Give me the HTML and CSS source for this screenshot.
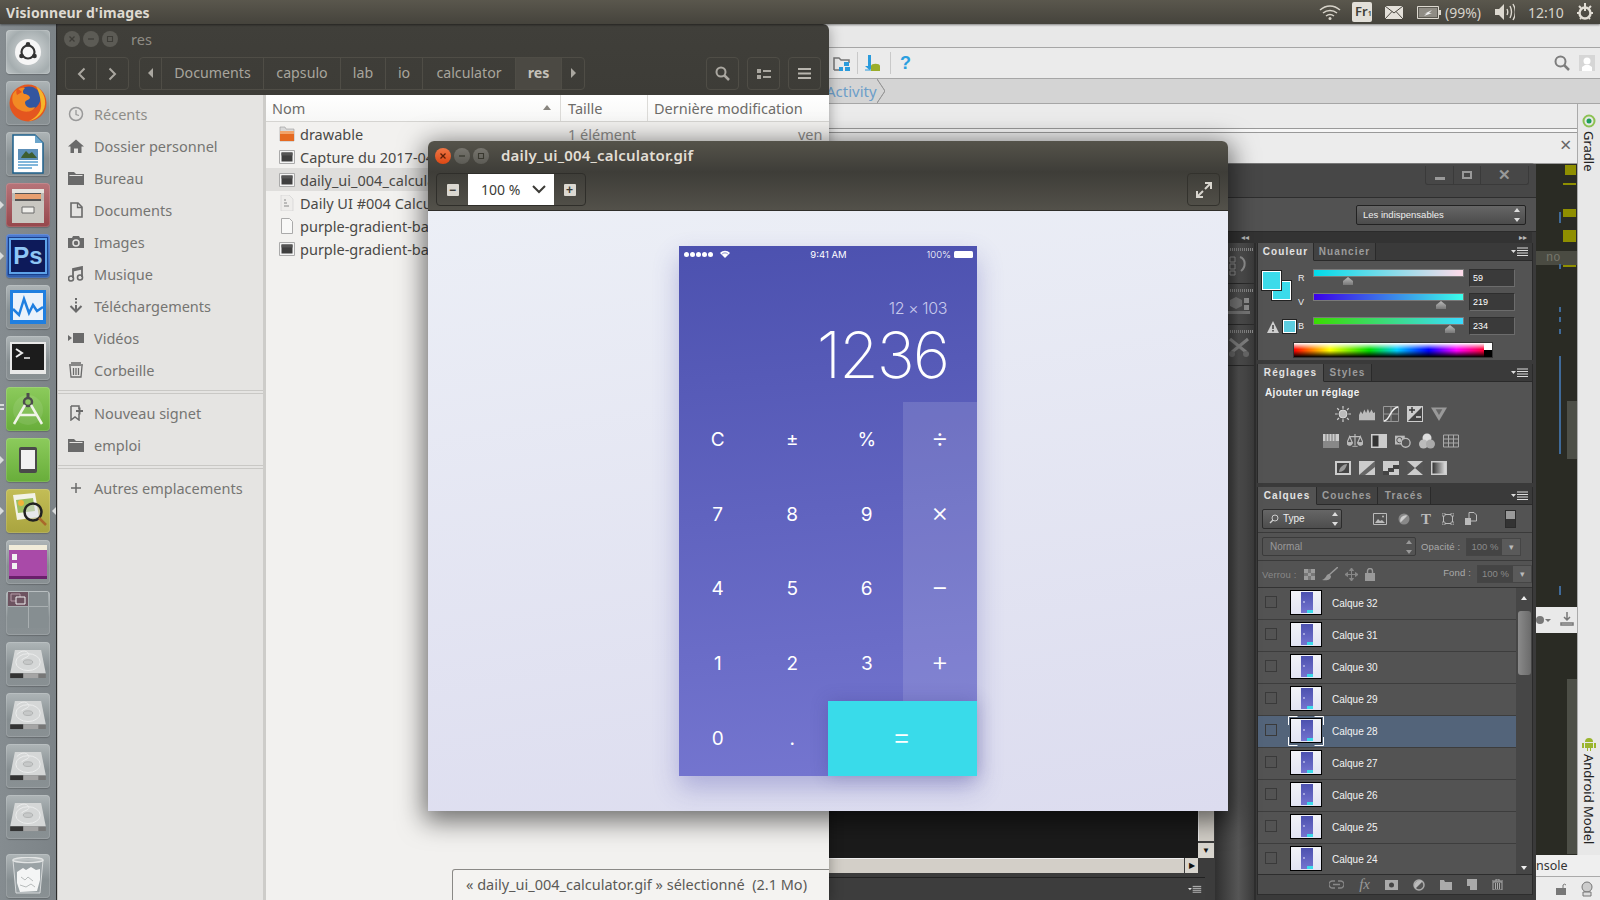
FILE: index.html
```html
<!DOCTYPE html>
<html lang="fr">
<head>
<meta charset="utf-8">
<title>Visionneur d'images</title>
<link rel="stylesheet" href="styles.css">
</head>
<body>
<svg class="defs" width="0" height="0">
  <defs>
    <symbol id="drive" viewBox="0 0 40 32">
      <path d="M6 1h28l5 25H1z" fill="#d5d7d7"/>
      <ellipse cx="20" cy="14" rx="13" ry="9" fill="none" stroke="#eceded" stroke-width="1"/>
      <ellipse cx="20" cy="14" rx="5" ry="2.500" fill="#c6c8c8" stroke="#a8abab" stroke-width=".8"/>
      <path d="M8 6c6-6 12-4 13 0 0 3-6 3-8 6" fill="none" stroke="#eceded" stroke-width="1"/>
      <path d="M1 26h38v5H1z" fill="#777"/>
      <path d="M1 26h14v5H1z" fill="#333"/>
      <path d="M15 26h16v5H15z" fill="#a5a5a5"/>
    </symbol>
    <symbol id="pmenu" viewBox="0 0 18 10">
      <path d="M0 3h5L2.500 6z" fill="#ddd"/>
      <path d="M6 1h11M6 3.500h11M6 6h11M6 8.500h11" stroke="#ddd" stroke-width="1"/>
    </symbol>
    <symbol id="imgfile" viewBox="0 0 16 16">
      <path d="M.5 1.500h15v13H.5z" fill="#f4f4f4" stroke="#aaa"/>
      <path d="M2.500 3.500h11v9h-11z" fill="#3f3f3f"/>
      <path d="M2.500 3.500h11v3h-11z" fill="#555"/>
    </symbol>
    <symbol id="mx" viewBox="0 0 8 8"><path d="M1.500 1.500l5 5M6.500 1.500l-5 5" stroke="currentColor" stroke-width="1.300"/></symbol>
    <symbol id="mm" viewBox="0 0 8 8"><path d="M1 4h6" stroke="currentColor" stroke-width="1.300"/></symbol>
    <symbol id="mb" viewBox="0 0 8 8"><path d="M1.500 1.500h5v5h-5z" fill="none" stroke="currentColor" stroke-width="1.100"/></symbol>
  </defs>
</svg>
<div class="desk">
  <header class="topbar">
    <span class="app-name">Visionneur d'images</span>
    <div class="tray">
      <svg class="tray-wifi" width="22" height="16" viewBox="0 0 22 16"><path d="M1 6c6-5.500 14-5.500 20 0M4 9c4-3.500 10-3.500 14 0M7 12c2.500-2 5.500-2 8 0" fill="none" stroke="#d8d4ca" stroke-width="1.500"/><circle cx="11" cy="14.500" r="1.500" fill="#d8d4ca"/></svg>
      <span class="tray-kbd">Fr<small>1</small></span>
      <svg class="tray-mail" width="18" height="13" viewBox="0 0 18 13"><path d="M0 0h18v13H0z" fill="#e4e1da"/><path d="M0 0l9 7 9-7M0 13l7-7.500M18 13l-7-7.500" fill="none" stroke="#4a473f"/></svg>
      <svg class="tray-batt" width="24" height="13" viewBox="0 0 24 13"><path d="M.5.500h21v12H.5z" fill="#5c5a52" stroke="#ddd9d0"/><path d="M22 4h2v5h-2z" fill="#ddd9d0"/><path d="M2 2h18v9H2z" fill="#8f8c84"/><path d="M7 8l8-4-3 3 3 0-8 3 3-3z" fill="#eee"/></svg>
      <span class="tray-text tray-pct">(99%)</span>
      <svg class="tray-vol" width="20" height="18" viewBox="0 0 20 18"><path d="M0 6h4l5-5v16l-5-5H0z" fill="#dcd8cf"/><path d="M12 6c1 2 1 4 0 6M15 3c2 4 2 8 0 12M18 1c3 5 3 11 0 16" fill="none" stroke="#dcd8cf" stroke-width="1.400"/></svg>
      <span class="tray-text tray-clock">12:10</span>
      <svg class="tray-gear" width="18" height="18" viewBox="0 0 18 18"><circle cx="9" cy="10" r="5.500" fill="none" stroke="#e2ded5" stroke-width="2.500"/><path d="M9 0v8M3 3l2 2M15 3l-2 2M1 10h2M15 10h2M4 16l1-1M14 16l-1-1" stroke="#e2ded5" stroke-width="2"/></svg>
    </div>
  </header>

  <nav class="launcher">
    <div class="tile tile-dash"><svg width="26" height="26" viewBox="0 0 36 36"><circle cx="18" cy="18" r="18" fill="#f6f6f6"/><circle cx="18" cy="18" r="9" fill="none" stroke="#333" stroke-width="3"/><circle cx="18" cy="7.500" r="3.200" fill="#333"/><circle cx="9" cy="23.500" r="3.200" fill="#333"/><circle cx="27" cy="23.500" r="3.200" fill="#333"/></svg></div>
    <div class="tile"><svg width="40" height="40" viewBox="0 0 40 40"><circle cx="20" cy="20" r="18.500" fill="#e4561f"/><circle cx="21" cy="15" r="11.500" fill="#33569f"/><path d="M28 3c8 5 12 16 7 25-3 5-8 9-14 10 8-4 13-10 12-18-1-6-2-12-5-17z" fill="#f6b52a"/><path d="M5 11c3-5 8-7 12-6-2 2-3 4-1 6 3 0 6 2 6 4-1 2-4 2-5 4 0 5 5 7 10 5-2 5-10 6-15 3C5 24 3 17 5 11z" fill="#f28a24"/><path d="M9 5c-1 3-1 5 0 7l5-3z" fill="#e4561f"/></svg></div>
    <div class="tile"><svg width="32" height="40" viewBox="0 0 32 40"><path d="M1 1h22l8 8v30H1z" fill="#fff" stroke="#1c5f8a" stroke-width="1.500"/><path d="M23 1l8 8h-8z" fill="#6ba5cb"/><path d="M6 15h20v11H6z" fill="#5c8fb8"/><path d="M10 22l4-5 3 3 3-2 5 6H9z" fill="#3e5e30"/><path d="M6 28h20M6 31h20M6 34h14" stroke="#5aa0d0" stroke-width="1.500"/></svg></div>
    <div class="tile tile-red pip-l"><svg width="36" height="40" viewBox="0 0 36 40"><path d="M2 4h32v34H2z" fill="#bdbbb5"/><path d="M2 4h32v4H2z" fill="#e4e2dd"/><path d="M5 8h26v8H5z" fill="#555"/><path d="M5 9h26v5H5z" fill="#e8a070"/><path d="M2 16h32v22H2z" fill="#c9c7c1"/><path d="M12 22h12v6H12z" fill="#efeeea" stroke="#6b6b6b"/></svg></div>
    <div class="tile tile-blue pip-l"><div class="ps-logo">Ps</div></div>
    <div class="tile"><svg width="38" height="36" viewBox="0 0 38 36"><path d="M1 1h36v34H1z" fill="#1f7fe0"/><path d="M4 4h30v27H4z" fill="#eaf2fb"/><path d="M4 20l6 6 5-16 5 14 4-8 4 6 6-4" fill="none" stroke="#1f7fe0" stroke-width="2.500"/></svg></div>
    <div class="tile"><svg width="36" height="32" viewBox="0 0 36 32"><path d="M0 0h36v32H0z" fill="#e8e8e8"/><path d="M2 2h32v26H2z" fill="#1c1c1c"/><path d="M6 7l6 4-6 4" fill="none" stroke="#eee" stroke-width="2"/><path d="M14 16h6" stroke="#eee" stroke-width="1.500"/></svg></div>
    <div class="tile tile-green pip-two"><svg width="34" height="36" viewBox="0 0 34 36"><circle cx="17" cy="19" r="15" fill="#fff" fill-opacity=".09"/><circle cx="17" cy="11" r="4" fill="none" stroke="#4c4c4c" stroke-width="2.500"/><path d="M17 2v5" stroke="#4c4c4c" stroke-width="3"/><path d="M14 14L3 33M20 14l11 19M8 24h18" stroke="#f0f4e8" stroke-width="2.500" fill="none"/></svg></div>
    <div class="tile tile-green pip-l"><svg width="18" height="26" viewBox="0 0 18 26"><path d="M2 0h14a2 2 0 0 1 2 2v22a2 2 0 0 1-2 2H2a2 2 0 0 1-2-2V2a2 2 0 0 1 2-2z" fill="#4a4a4a"/><path d="M2 3h14v19H2z" fill="#f1f1f1"/></svg></div>
    <div class="tile tile-olive pip-both"><svg width="38" height="40" viewBox="0 0 38 40"><path d="M4 4l22-2 4 24-22 3z" fill="#f2f2e8"/><path d="M7 9l17-2 2 13-17 2z" fill="#9cbf60"/><circle cx="12" cy="12" r="3" fill="#f0b23a"/><circle cx="24" cy="21" r="8.500" fill="#dde" fill-opacity=".5" stroke="#222" stroke-width="2.500"/><path d="M30 27l7 7" stroke="#a9692b" stroke-width="2.500"/></svg></div>
    <div class="tile"><svg width="38" height="34" viewBox="0 0 38 34"><path d="M0 0h38v34H0z" fill="#8f2b91"/><path d="M0 0h38v5H0z" fill="#f1ecd9"/><path d="M0 5h38v29H0z" fill="#a94aa8"/><path d="M3 9h5v6H3zM3 18h5v6H3z" fill="#f2f2f2"/><path d="M0 31h38v3H0z" fill="#6a1f6b"/></svg></div>
    <div class="tile tile-work"><div class="work-grid"><span class="work-on"><svg width="16" height="12" viewBox="0 0 16 12"><path d="M1 1h9v7H1z" fill="none" stroke="#b59aa6"/><path d="M6 4h9v7H6z" fill="#6d5360" stroke="#f0f0f0"/></svg></span><span></span><span></span><span></span></div></div>
    <div class="tile"><svg width="38" height="30"><use href="#drive"/></svg></div>
    <div class="tile"><svg width="38" height="30"><use href="#drive"/></svg></div>
    <div class="tile"><svg width="38" height="30"><use href="#drive"/></svg></div>
    <div class="tile"><svg width="38" height="30"><use href="#drive"/></svg></div>
    <div class="tile tile-trash"><svg width="32" height="38" viewBox="0 0 32 38"><path d="M1 3h30l-3 33H4z" fill="#9aa2a5" stroke="#d6d9da"/><ellipse cx="16" cy="3" rx="15" ry="2.500" fill="none" stroke="#e2e4e4" stroke-width="1.500"/><path d="M5 15l6-4 3 2 5-3 5 3 4-1 0 11-3 11-17 1-3-9z" fill="#f4f5f5"/><path d="M9 20l4 3 3-3 5 4M8 28l6 2 5-3 4 3" fill="none" stroke="#b8bcbc"/></svg></div>
  </nav>

  <section class="studio">
    <div class="studio-row studio-menu"></div>
    <div class="studio-row studio-tools">
      <svg class="st-folder" width="18" height="15" viewBox="0 0 18 15"><path d="M1 13V1h5l2 2h8v3" fill="none" stroke="#777" stroke-width="1.500"/><path d="M1 13h7" stroke="#777" stroke-width="1.500"/><path d="M11 5h5v4h-5zM6 10h4v4H6zM12 10h5v4h-5z" fill="#2a9bdc"/></svg>
      <i class="st-sep"></i>
      <svg class="st-sdk" width="15" height="17" viewBox="0 0 15 17"><path d="M3 0h3v11h3L4.500 15 0 11h3z" fill="#2a9bdc"/><path d="M6 11c0-3 9-3 9 0v5H6z" fill="#9aad2b"/><path d="M0 15h6" stroke="#2a9bdc"/></svg>
      <i class="st-sep"></i>
      <span class="st-help">?</span>
      <svg class="st-search" width="16" height="16" viewBox="0 0 16 16"><circle cx="6.500" cy="6.500" r="5" fill="none" stroke="#7d7d7d" stroke-width="2"/><path d="M10 10l5 5" stroke="#7d7d7d" stroke-width="2.500"/></svg>
      <svg class="st-user" width="16" height="16" viewBox="0 0 16 16"><path d="M0 0h16v16H0z" fill="#d6d6d6"/><circle cx="8" cy="6" r="3.500" fill="#fff"/><path d="M3 16v-4l3-2h4l3 2v4z" fill="#fff"/></svg>
    </div>
    <div class="studio-row studio-crumb"><span class="crumb-text">Activity</span><i class="crumb-chev"></i></div>
    <div class="studio-body">
      <div class="studio-left">
        <div class="studio-row studio-strip"></div>
        <div class="studio-row studio-gap"></div>
        <div class="studio-row studio-tabs"><span class="tab-x">×</span></div>
        <div class="editor">
          <i class="mark m1"></i><i class="mark m2"></i><i class="mark m3"></i><i class="mark m4"></i><i class="mark m5"></i>
          <div class="noal">no al</div>
          <i class="bluel b1"></i><i class="bluel b2"></i><i class="bluel b3"></i><i class="bluel b4"></i><i class="bluel b5"></i><i class="bluel b6"></i><i class="bluel b7"></i>
          <i class="greyb g1"></i><i class="greyb g2"></i>
          <div class="settingsrow">
            <svg width="16" height="14" viewBox="0 0 16 14"><circle cx="4" cy="7" r="4" fill="#777"/><path d="M9 6h6l-3 3z" fill="#777"/></svg>
            <svg width="14" height="16" viewBox="0 0 14 16"><path d="M7 0v8M4 5l3 3 3-3M1 11h12v2H1z" fill="none" stroke="#777" stroke-width="1.500"/></svg>
          </div>
        </div>
      </div>
      <aside class="stripe">
        <div class="stripe-top">
          <svg width="14" height="14" viewBox="0 0 14 14"><circle cx="7" cy="7" r="5.500" fill="none" stroke="#8cc152" stroke-width="2"/><circle cx="7" cy="7" r="2.500" fill="#1e9e5a"/></svg>
          <span class="stripe-label">Gradle</span>
        </div>
        <div class="stripe-bottom">
          <svg width="14" height="14" viewBox="0 0 14 14"><path d="M3 5a4 4 0 0 1 8 0zM3 6h8v5H3zM0 6h2v5H0zM12 6h2v5h-2zM5 11h1v3H5zM8 11h1v3H8z" fill="#9ab52e"/></svg>
          <span class="stripe-label">Android Model</span>
        </div>
      </aside>
    </div>
    <div class="console-tab">nsole</div>
    <div class="console-foot">
      <svg width="10" height="12" viewBox="0 0 10 12"><path d="M0 5h10v7H0z" fill="#777"/><path d="M7 5V2a2 2 0 0 1 3 0" fill="none" stroke="#777"/></svg>
      <svg width="14" height="16" viewBox="0 0 14 16"><circle cx="7" cy="6" r="5" fill="#ccc" stroke="#777"/><path d="M3 11h8v4H3z" fill="#ddd" stroke="#777"/></svg>
    </div>
  </section>

  <section class="ps">
    <div class="ps-title">
      <div class="ps-ctrls">
        <span class="ps-ctrl"><i class="pc-min"></i></span>
        <span class="ps-ctrl ps-ctrl-n"><i class="pc-max"></i></span>
        <span class="ps-ctrl ps-ctrl-w">✕</span>
      </div>
    </div>
    <div class="ps-options"><div class="ps-workspace"><span>Les indispensables</span><b class="updown"></b></div></div>
    <div class="ps-body">
      <div class="ps-doc">
        <div class="doc-main">
          <div class="canvas"></div>
          <div class="vscroll"><div class="vthumb"></div><div class="vbtn">▼</div></div>
        </div>
        <div class="hscroll"><div class="hthumb"></div><div class="hbtn">▶</div></div>
        <div class="doc-foot"><svg width="14" height="9"><use href="#pmenu"/></svg></div>
      </div>
      <div class="ps-right">
        <div class="collapse"><span>◂◂</span><span>▸▸</span></div>
        <div class="ps-columns">
          <div class="dock">
            <div class="dock-group"><i class="dock-dots"></i><svg width="22" height="22" viewBox="0 0 22 22"><path d="M2 3h5v5H2zM2 10h5v5H2zM2 17h5v4H2z" fill="none" stroke="#aaa"/><path d="M12 3c6 2 6 10 1 14" fill="none" stroke="#aaa" stroke-width="2"/></svg></div>
            <div class="dock-group"><i class="dock-dots"></i><svg width="22" height="22" viewBox="0 0 22 22"><path d="M2 5l6-3 6 3v6l-6 3-6-3z" fill="#888"/><path d="M16 3h5v5h-5zM16 10h5v5h-5z" fill="#aaa"/><path d="M0 16h22v3H0z" fill="#888"/></svg></div>
            <div class="dock-group"><i class="dock-dots"></i><svg width="22" height="22" viewBox="0 0 22 22"><path d="M2 3l16 13M20 3L4 16" stroke="#999" stroke-width="3"/><circle cx="4" cy="18" r="3" fill="#777"/><circle cx="18" cy="18" r="3" fill="#777"/></svg></div>
          </div>
          <div class="panels">
            <div class="panel">
              <div class="ptabs">
                <span class="ptab ptab-on ptw-56">Couleur</span><span class="ptab ptw-62">Nuancier</span>
                <svg class="pmenu" width="18" height="10"><use href="#pmenu"/></svg>
              </div>
              <div class="color-body">
                <div class="color-main">
                  <div class="swatches">
                    <i class="sw sw-fg"></i><i class="sw sw-bg"></i>
                    <svg class="sw-warn" width="12" height="12" viewBox="0 0 12 12"><path d="M6 0l6 12H0z" fill="#cfcfcf"/><path d="M5.300 4h1.400v4H5.300zM5.300 9h1.400v1.500H5.300z" fill="#333"/></svg>
                    <i class="sw sw-web"></i>
                  </div>
                  <div class="rgb">
                    <div class="rgb-row"><span class="rgb-l">R</span><div class="slider s-r"><i class="thumb th-r"></i></div><span class="rgb-in">59</span></div>
                    <div class="rgb-row"><span class="rgb-l">V</span><div class="slider s-v"><i class="thumb th-v"></i></div><span class="rgb-in">219</span></div>
                    <div class="rgb-row"><span class="rgb-l">B</span><div class="slider s-b"><i class="thumb th-b"></i></div><span class="rgb-in">234</span></div>
                  </div>
                </div>
                <div class="spectrum"><i class="spec-w"></i><i class="spec-k"></i></div>
              </div>
            </div>
            <div class="panel">
              <div class="ptabs">
                <span class="ptab ptab-on ptw-67">Réglages</span><span class="ptab ptw-48">Styles</span>
                <svg class="pmenu" width="18" height="10"><use href="#pmenu"/></svg>
              </div>
              <div class="adj-body">
                <div class="adj-title">Ajouter un réglage</div>
                <div class="adj-row">
                  <svg width="18" height="18" viewBox="0 0 18 18"><circle cx="9" cy="9" r="4.500" fill="#bbb" stroke="#ddd"/><path d="M9 0v3M9 15v3M0 9h3M15 9h3M2.500 2.500l2 2M13.500 13.500l2 2M2.500 15.500l2-2M13.500 4.500l2-2" stroke="#ccc" stroke-width="1.400"/></svg>
                  <svg width="18" height="16" viewBox="0 0 18 16"><path d="M0 15V9l2-4 2 3 2-5 2 4 2-5 2 5 2-4 2 4 2-1v9z" fill="#bbb"/></svg>
                  <svg width="16" height="16" viewBox="0 0 16 16"><path d="M.5.500h15v15H.5zM.5 8h15M8 .500v15" fill="none" stroke="#999"/><path d="M1 15c6 0 6-13 14-14" fill="none" stroke="#eee" stroke-width="1.400"/></svg>
                  <svg width="16" height="16" viewBox="0 0 16 16"><path d="M0 0h16v16H0z" fill="#ccc"/><path d="M1 15L15 1v14z" fill="#444"/><path d="M2 4h6M5 1v6" stroke="#333" stroke-width="1.400"/><path d="M9 11h5" stroke="#eee" stroke-width="1.400"/></svg>
                  <svg width="17" height="16" viewBox="0 0 17 16"><path d="M0 1h17L8.500 15.500z" fill="#999"/><path d="M5 3h7l-3.500 6z" fill="#666"/></svg>
                </div>
                <div class="adj-row adj-six">
                  <svg width="16" height="14" viewBox="0 0 16 14"><path d="M0 0h16v7H0z" fill="#ccc"/><path d="M3 0v7M6 0v7M9 0v7M12 0v7" stroke="#777"/><path d="M0 7h16v7H0z" fill="#888"/></svg>
                  <svg width="18" height="16" viewBox="0 0 18 16"><path d="M9 0v13M3 3h12M0 10l3-7 3 7zM12 10l3-7 3 7z" fill="none" stroke="#bbb" stroke-width="1.300"/><path d="M0 10a3 3 0 0 0 6 0zM12 10a3 3 0 0 0 6 0zM6 14h6" fill="#bbb" stroke="#bbb"/></svg>
                  <svg width="16" height="14" viewBox="0 0 16 14"><path d="M0 0h16v14H0z" fill="#ccc"/><path d="M1.500 1.500h6v11h-6z" fill="#333"/></svg>
                  <svg width="18" height="16" viewBox="0 0 18 16"><path d="M0 2h11v10H0z" fill="#bbb"/><circle cx="5" cy="7" r="3" fill="none" stroke="#444"/><circle cx="12" cy="10" r="5" fill="#555" stroke="#bbb" stroke-width="1.500"/></svg>
                  <svg width="16" height="16" viewBox="0 0 16 16"><circle cx="8" cy="5" r="4.500" fill="#ddd"/><circle cx="4.500" cy="11" r="4.500" fill="#bbb"/><circle cx="11.500" cy="11" r="4.500" fill="#aaa"/></svg>
                  <svg width="16" height="13" viewBox="0 0 16 13"><path d="M.5.500h15v12H.5zM.5 4.500h15M.5 8.500h15M5.500.500v12M10.500.500v12" fill="none" stroke="#aaa"/></svg>
                </div>
                <div class="adj-row">
                  <svg width="16" height="14" viewBox="0 0 16 14"><path d="M0 0h16v14H0z" fill="#ccc"/><path d="M2 2h12v10H2z" fill="#444"/><path d="M4 11c0-5 5-8 8-8-1 5-4 8-8 8z" fill="#999"/></svg>
                  <svg width="16" height="14" viewBox="0 0 16 14"><path d="M0 0h16v14H0z" fill="#ccc"/><path d="M0 14L16 0v6L6 14z" fill="#666"/></svg>
                  <svg width="16" height="14" viewBox="0 0 16 14"><path d="M0 0h16v14H0z" fill="#ccc"/><path d="M0 14v-4h5V7h5V4h6v4h-5v3H6v3z" fill="#444"/></svg>
                  <svg width="16" height="14" viewBox="0 0 16 14"><path d="M0 0h16v14H0z" fill="#ccc"/><path d="M0 0l8 7 8-7v14L8 7l-8 7z" fill="#555"/></svg>
                  <svg width="16" height="14" viewBox="0 0 16 14"><defs><linearGradient id="gm"><stop offset="0" stop-color="#333"/><stop offset="1" stop-color="#ddd"/></linearGradient></defs><path d="M0 0h16v14H0z" fill="#ccc"/><path d="M1.500 1.500h13v11h-13z" fill="url(#gm)"/></svg>
                </div>
              </div>
            </div>
            <div class="panel panel-layers">
              <div class="ptabs">
                <span class="ptab ptab-on ptw-59">Calques</span><span class="ptab ptw-61">Couches</span><span class="ptab ptw-53">Tracés</span>
                <svg class="pmenu" width="18" height="10"><use href="#pmenu"/></svg>
              </div>
              <div class="lrow lrow-filter">
                <div class="pdrop pd-type"><svg width="10" height="10" viewBox="0 0 10 10"><circle cx="6" cy="4" r="3" fill="none" stroke="#ccc"/><path d="M4 6L1 9" stroke="#ccc" stroke-width="1.400"/></svg><span>Type</span><b class="updown"></b></div>
                <div class="filter-icons">
                  <svg width="14" height="12" viewBox="0 0 14 12"><path d="M.5.500h13v11H.5z" fill="none" stroke="#bbb"/><path d="M2 10l3-4 2 2 2-1 3 3z" fill="#bbb"/><circle cx="10" cy="3.500" r="1" fill="#bbb"/></svg>
                  <svg width="12" height="12" viewBox="0 0 12 12"><circle cx="6" cy="6" r="5.500" fill="#888"/><path d="M9.500 2.500l-7 7A5.500 5.500 0 0 1 9.500 2.500z" fill="#ccc"/></svg>
                  <span class="ficon-t">T</span>
                  <svg width="12" height="12" viewBox="0 0 12 12"><path d="M1.500 1.500h9v9h-9z" fill="none" stroke="#bbb"/><path d="M0 0h3v3H0zM9 0h3v3H9zM0 9h3v3H0zM9 9h3v3H9z" fill="#555" stroke="#bbb" stroke-width=".7"/></svg>
                  <svg width="12" height="13" viewBox="0 0 12 13"><path d="M4 .500h5l2.500 2.500v6H4z" fill="none" stroke="#bbb"/><path d="M0 6h6v7H0z" fill="#bbb"/></svg>
                </div>
                <div class="filter-toggle"><i></i></div>
              </div>
              <div class="lrow lrow-blend">
                <div class="pdrop pd-mode"><span>Normal</span><b class="updown dim"></b></div>
                <span class="plabel">Opacité :</span>
                <div class="pcombo"><span>100 %</span><b>▾</b></div>
              </div>
              <div class="lrow lrow-lock">
                <span class="plabel verrou">Verrou :</span>
                <svg width="11" height="11" viewBox="0 0 11 11"><path d="M0 0h11v11H0z" fill="#777"/><path d="M0 0h4v4H0zM7 0h4v4H7zM4 4h3v3H4zM0 7h4v4H0zM7 7h4v4H7z" fill="#9c9c9c"/></svg>
                <svg width="16" height="14" viewBox="0 0 16 14"><path d="M16 0L7 8" stroke="#999" stroke-width="1.500"/><path d="M7 7c-3 0-2 4-7 6 5 1 9 0 9-4z" fill="#999"/></svg>
                <svg width="13" height="13" viewBox="0 0 13 13"><path d="M6.500 0v13M0 6.500h13M6.500 0L4.500 2.500h4zM6.500 13l-2-2.500h4zM0 6.500L2.500 4.500v4zM13 6.500l-2.500-2v4z" stroke="#888" fill="#888"/></svg>
                <svg width="10" height="13" viewBox="0 0 10 13"><path d="M0 5h10v8H0z" fill="#999"/><path d="M2.500 5V3a2.500 2.500 0 0 1 5 0v2" fill="none" stroke="#999" stroke-width="1.400"/></svg>
                <span class="plabel fond">Fond :</span>
                <div class="pcombo"><span>100 %</span><b>▾</b></div>
              </div>
              <div class="layers">
                <div class="layer-list">
                  <div class="layer"><i class="eye"></i><div class="lthumb"><div class="lphone"><i></i></div></div><span class="lname">Calque 32</span></div>
                  <div class="layer"><i class="eye"></i><div class="lthumb"><div class="lphone"><i></i></div></div><span class="lname">Calque 31</span></div>
                  <div class="layer"><i class="eye"></i><div class="lthumb"><div class="lphone"><i></i></div></div><span class="lname">Calque 30</span></div>
                  <div class="layer"><i class="eye"></i><div class="lthumb"><div class="lphone"><i></i></div></div><span class="lname">Calque 29</span></div>
                  <div class="layer layer-sel"><i class="eye"></i><div class="lthumb"><div class="lphone"><i></i></div><svg class="lcorners" width="36" height="30" viewBox="0 0 36 30"><path d="M.5 9V.5h9M26.500.5h9V9M.5 21v8.500h9M26.500 29.500h9V21" fill="none" stroke="#fff"/></svg></div><span class="lname">Calque 28</span></div>
                  <div class="layer"><i class="eye"></i><div class="lthumb"><div class="lphone"><i></i></div></div><span class="lname">Calque 27</span></div>
                  <div class="layer"><i class="eye"></i><div class="lthumb"><div class="lphone"><i></i></div></div><span class="lname">Calque 26</span></div>
                  <div class="layer"><i class="eye"></i><div class="lthumb"><div class="lphone"><i></i></div></div><span class="lname">Calque 25</span></div>
                  <div class="layer"><i class="eye"></i><div class="lthumb"><div class="lphone"><i></i></div></div><span class="lname">Calque 24</span></div>
                </div>
                <div class="layer-scroll"><span class="ls-up"></span><div class="ls-thumb"></div><span class="ls-down"></span></div>
              </div>
              <div class="layer-foot">
                <svg class="foot-link" width="15" height="9" viewBox="0 0 15 9"><path d="M6 1H3.500a3.500 3.500 0 0 0 0 7H6M9 1h2.500a3.500 3.500 0 0 1 0 7H9M4 4.500h7" fill="none" stroke="#888" stroke-width="1.300"/></svg>
                <span class="fx">fx</span>
                <svg width="13" height="10" viewBox="0 0 13 10"><path d="M0 0h13v10H0z" fill="#aaa"/><circle cx="6.500" cy="5" r="2.500" fill="#444"/></svg>
                <svg width="12" height="12" viewBox="0 0 12 12"><circle cx="6" cy="6" r="5" fill="#555" stroke="#aaa" stroke-width="1.500"/><path d="M9.500 2.500l-7 7A5 5 0 0 1 9.500 2.500z" fill="#bbb"/></svg>
                <svg width="12" height="10" viewBox="0 0 12 10"><path d="M0 10V0h4l1 2h7v8z" fill="#aaa"/></svg>
                <svg width="10" height="11" viewBox="0 0 10 11"><path d="M0 0h10v11H3V7H0z" fill="#aaa"/></svg>
                <svg width="11" height="11" viewBox="0 0 11 11"><path d="M0 2h11M4 2V0h3v2M1 3h9v8H1zM3.500 4v6M5.500 4v6M7.500 4v6" fill="none" stroke="#aaa"/></svg>
              </div>
            </div>
          </div>
        </div>
      </div>
    </div>
  </section>

  <section class="files">
    <div class="win-head">
      <div class="win-title">
        <div class="win-btns">
          <span class="dot dot-dim"><svg width="8" height="8"><use href="#mx"/></svg></span><span class="dot dot-dim"><svg width="8" height="8"><use href="#mm"/></svg></span><span class="dot dot-dim"><svg width="8" height="8"><use href="#mb"/></svg></span>
        </div>
        <span class="files-name">res</span>
      </div>
      <div class="files-tools">
        <div class="tgroup">
          <span class="tbtn tb-nav"><svg width="9" height="14" viewBox="0 0 9 14"><path d="M7.500 1.500L2 7l5.500 5.500" fill="none" stroke="#aaa7a0" stroke-width="2"/></svg></span>
          <span class="tbtn tb-nav"><svg width="9" height="14" viewBox="0 0 9 14"><path d="M1.500 1.500L7 7l-5.500 5.500" fill="none" stroke="#aaa7a0" stroke-width="2"/></svg></span>
        </div>
        <div class="tgroup pathbar">
          <span class="tbtn tb-arrow"><i class="tri-l"></i></span>
          <span class="tbtn pb-doc">Documents</span>
          <span class="tbtn pb-cap">capsulo</span>
          <span class="tbtn pb-lab">lab</span>
          <span class="tbtn pb-io">io</span>
          <span class="tbtn pb-calc">calculator</span>
          <span class="tbtn pb-res">res</span>
          <span class="tbtn tb-arrow tb-arrow-r"><i class="tri-r"></i></span>
        </div>
        <div class="tright">
          <span class="tgroup tbtn tb-act"><svg width="15" height="15" viewBox="0 0 15 15"><circle cx="6" cy="6" r="4.500" fill="none" stroke="#aaa7a0" stroke-width="2"/><path d="M9.500 9.500l4.500 4.500" stroke="#aaa7a0" stroke-width="2.500"/></svg></span>
          <span class="tgroup tbtn tb-act"><svg width="14" height="12" viewBox="0 0 14 12"><path d="M0 1h4v4H0zM0 7h4v4H0z" fill="#aaa7a0"/><path d="M6 2h8v2H6zM6 8h8v2H6z" fill="#aaa7a0"/></svg></span>
          <span class="tgroup tbtn tb-act"><svg width="13" height="11" viewBox="0 0 13 11"><path d="M0 0h13v2H0zM0 4.500h13v2H0zM0 9h13v2H0z" fill="#b8b5ae"/></svg></span>
        </div>
      </div>
    </div>
    <div class="files-body">
      <aside class="sidebar">
        <div class="side-item side-dim"><svg width="16" height="16" viewBox="0 0 16 16"><circle cx="8" cy="8" r="6.500" fill="none" stroke="#999" stroke-width="1.500"/><path d="M8 4v4.500l3 1" fill="none" stroke="#999" stroke-width="1.300"/></svg><span>Récents</span></div>
        <div class="side-item"><svg width="16" height="16" viewBox="0 0 16 16"><path d="M8 1.500L0 8.500h2.500V15H6v-4.500h4V15h3.500V8.500H16z" fill="#6a6a6a"/></svg><span>Dossier personnel</span></div>
        <div class="side-item"><svg width="16" height="16" viewBox="0 0 16 16"><path d="M0 2h6l2 2h8v11H0z" fill="#6a6a6a"/><path d="M1.500 5.500h13" stroke="#e5e4e2"/></svg><span>Bureau</span></div>
        <div class="side-item"><svg width="16" height="16" viewBox="0 0 16 16"><path d="M3 1h7l4 4v10H3z" fill="none" stroke="#6a6a6a" stroke-width="1.600"/><path d="M9.500 1v4.500H14" fill="none" stroke="#6a6a6a" stroke-width="1.300"/></svg><span>Documents</span></div>
        <div class="side-item"><svg width="16" height="16" viewBox="0 0 16 16"><path d="M0 4h4l1-2h6l1 2h4v10H0z" fill="#6a6a6a"/><circle cx="8" cy="9" r="3" fill="none" stroke="#e5e4e2" stroke-width="1.500"/></svg><span>Images</span></div>
        <div class="side-item"><svg width="16" height="16" viewBox="0 0 16 16"><path d="M5 12V3l9-2v10" fill="none" stroke="#6a6a6a" stroke-width="1.800"/><path d="M5 4.500l9-2" stroke="#6a6a6a" stroke-width="2"/><circle cx="3" cy="12.500" r="2.500" fill="none" stroke="#6a6a6a" stroke-width="1.600"/><circle cx="12" cy="11.500" r="2.500" fill="none" stroke="#6a6a6a" stroke-width="1.600"/></svg><span>Musique</span></div>
        <div class="side-item"><svg width="16" height="16" viewBox="0 0 16 16"><path d="M8 0v2M8 3.500v2M8 7v6M2.500 8L8 13.500 13.500 8" fill="none" stroke="#6a6a6a" stroke-width="2"/></svg><span>Téléchargements</span></div>
        <div class="side-item"><svg width="16" height="16" viewBox="0 0 16 16"><path d="M5 3h11v10H5zM0 5l4 3-4 3z" fill="#6a6a6a"/></svg><span>Vidéos</span></div>
        <div class="side-item side-last"><svg width="16" height="16" viewBox="0 0 16 16"><path d="M1 3h14M3 1h10M2 4l1 11h10l1-11M5.500 6v7M8 6v7M10.500 6v7" fill="none" stroke="#6a6a6a" stroke-width="1.300"/></svg><span>Corbeille</span></div>
        <div class="side-sep"></div>
        <div class="side-item"><svg width="16" height="16" viewBox="0 0 16 16"><path d="M3 1h8v3M3 1v14l4-3 4 3V9" fill="none" stroke="#6a6a6a" stroke-width="1.500"/><path d="M8 6h7M11.500 2.500v7" stroke="#6a6a6a" stroke-width="2"/></svg><span>Nouveau signet</span></div>
        <div class="side-item side-last"><svg width="16" height="16" viewBox="0 0 16 16"><path d="M0 2h6l2 2h8v11H0z" fill="#6a6a6a"/><path d="M1.500 5.500h13" stroke="#e5e4e2"/></svg><span>emploi</span></div>
        <div class="side-sep"></div>
        <div class="side-item"><svg width="16" height="16" viewBox="0 0 16 16"><path d="M8 3v10M3 8h10" stroke="#6a6a6a" stroke-width="1.500"/></svg><span>Autres emplacements</span></div>
      </aside>
      <div class="listing">
        <div class="cols">
          <span class="col col-name">Nom<i class="sort"></i></span>
          <span class="col col-size">Taille</span>
          <span class="col col-date">Dernière modification</span>
        </div>
        <div class="row"><svg width="16" height="16" viewBox="0 0 16 16"><path d="M1 1h5l1 2h8v12H1z" fill="#d9d9d9" stroke="#999" stroke-width=".6"/><path d="M1 5h14v10H1z" fill="#e56a21"/><path d="M1 5h14v3H1z" fill="#f2a36a"/></svg><span class="fname">drawable</span><span class="fsize">1 élément</span><span class="fdate">ven</span></div>
        <div class="row"><svg width="16" height="16"><use href="#imgfile"/></svg><span class="fname">Capture du 2017-04-21 à 11.05.16.png</span></div>
        <div class="row row-sel"><svg width="16" height="16"><use href="#imgfile"/></svg><span class="fname">daily_ui_004_calculator.gif</span></div>
        <div class="row"><svg width="16" height="16" viewBox="0 0 16 16"><path d="M2 0h8l4 4v12H2z" fill="#eeedeb" stroke="#ccc" stroke-width=".6"/><path d="M5 5h2M5 8h3M5 11h5" stroke="#888"/></svg><span class="fname">Daily UI #004 Calculator.psd</span></div>
        <div class="row"><svg width="16" height="16" viewBox="0 0 16 16"><path d="M2.500.500h8l3 3v12h-11z" fill="#f8f8f7" stroke="#aaa"/></svg><span class="fname">purple-gradient-background.psd</span></div>
        <div class="row"><svg width="16" height="16"><use href="#imgfile"/></svg><span class="fname">purple-gradient-background.png</span></div>
        <div class="pill">« daily_ui_004_calculator.gif » sélectionné  (2.1 Mo)</div>
      </div>
    </div>
  </section>

  <section class="viewer">
    <div class="win-head vw-head">
      <div class="win-title vw-title">
        <div class="win-btns">
          <span class="dot dot-red"><svg width="8" height="8"><use href="#mx"/></svg></span><span class="dot dot-grey"><svg width="8" height="8"><use href="#mm"/></svg></span><span class="dot dot-grey"><svg width="8" height="8"><use href="#mb"/></svg></span>
        </div>
        <span class="vw-name">daily_ui_004_calculator.gif</span>
      </div>
      <div class="vw-tools">
        <div class="zoombox">
          <span class="zoom-btn"><i class="zoom-sq">−</i></span>
          <span class="zoom-val"><span>100 %</span><svg width="14" height="9" viewBox="0 0 14 9"><path d="M1 1l6 6 6-6" fill="none" stroke="#3c3b37" stroke-width="2"/></svg></span>
          <span class="zoom-btn"><i class="zoom-sq">+</i></span>
        </div>
        <span class="vw-full"><svg width="16" height="16" viewBox="0 0 16 16"><path d="M9 1h6v6M15 1L9 7M7 15H1V9M1 15l6-6" fill="none" stroke="#d8d5ce" stroke-width="2"/></svg></span>
      </div>
    </div>
    <div class="stage">
      <div class="phone">
        <div class="status">
          <span class="st-left"><i class="sigdots"><b></b><b></b><b></b><b></b><b></b></i><svg width="10" height="8" viewBox="0 0 10 8"><path d="M0 3c3-3 7-3 10 0L5 8z" fill="#fff"/><path d="M2.200 3.900c1.600-1.400 4-1.400 5.600 0" stroke="#4f53b1" stroke-width=".7" fill="none"/></svg></span>
          <span class="st-mid">9:41 AM</span>
          <span class="st-right">100%<i class="batt"></i></span>
        </div>
        <div class="display">
          <div class="expr">12 × 103</div>
          <div class="result">1236</div>
        </div>
        <div class="keys">
          <span class="key">C</span><span class="key">±</span><span class="key">%</span><span class="key key-op">÷</span>
          <span class="key">7</span><span class="key">8</span><span class="key">9</span><span class="key key-op">×</span>
          <span class="key">4</span><span class="key">5</span><span class="key">6</span><span class="key key-op">−</span>
          <span class="key">1</span><span class="key">2</span><span class="key">3</span><span class="key key-op">+</span>
          <span class="key">0</span><span class="key">.</span><span class="key key-eq">=</span>
        </div>
      </div>
    </div>
  </section>
</div>
</body>
</html>
```
FILE: styles.css
```css
* { box-sizing: border-box; }
html, body { margin: 0; padding: 0; }
body { width: 1600px; height: 900px; overflow: hidden; background: #333; font-family: "Noto Sans", "Open Sans", sans-serif; }
.defs { position: absolute; }
i { font-style: normal; display: block; }
svg { display: block; flex: none; }

.desk { position: relative; width: 1600px; height: 900px; overflow: hidden; background: #444; }

/* top panel */
.topbar { position: relative; z-index: 20; height: 24px; display: flex; align-items: center; justify-content: space-between; background: linear-gradient(#5a574d, #45433c); box-shadow: 0 1px 2px rgba(0,0,0,.45); color: #e0dcd3; }
.app-name { margin-left: 6px; font-size: 14px; font-weight: 700; letter-spacing: .1px; color: #dedad1; }
.tray { display: flex; align-items: center; height: 24px; }
.tray-wifi { margin-right: 11px; }
.tray-kbd { width: 20px; height: 20px; border-radius: 2px; background: #e3e0d9; color: #403e38; font-size: 13px; font-weight: 600; line-height: 18px; padding-left: 3px; margin-right: 13px; }
.tray-kbd small { font-size: 7px; }
.tray-mail { margin-right: 14px; }
.tray-batt { margin-right: 4px; }
.tray-text { font-size: 14px; color: #d7d3ca; }
.tray-pct { width: 50px; }
.tray-vol { margin-right: 13px; }
.tray-clock { width: 44px; }
.tray-gear { margin-right: 6px; margin-left: 4px; }

/* launcher */
.launcher { position: relative; z-index: 10; width: 56px; height: 876px; background: linear-gradient(90deg, #858c90, #7c8387); padding: 6px 0 0 6px; display: flex; flex-direction: column; gap: 7px; box-shadow: 1px 0 1px rgba(0,0,0,.25); }
.tile { position: relative; width: 44px; height: 44px; flex: none; border-radius: 4px; display: flex; align-items: center; justify-content: center; background: linear-gradient(#aeb5b7, #868e91 60%, #899093); box-shadow: inset 0 0 0 1px rgba(255,255,255,.14), 0 1px 1px rgba(0,0,0,.2); }
.tile-dash { background: radial-gradient(circle at 55% 50%, #d8dcdd, #a5adaf 70%, #c0c6c7); }
.tile-red { background: linear-gradient(#b77479, #96474c); }
.tile-blue { background: linear-gradient(#4c7ad0, #2f5dab); }
.tile-green { background: linear-gradient(#8ccb5c, #68ad3a); }
.tile-olive { background: linear-gradient(#c3bd56, #a9a43f); }
.tile-trash { margin-top: 8px; }
.pip-l::before, .pip-both::before, .pip-two::before { content: ""; position: absolute; left: -6px; top: 18px; border: 4px solid transparent; border-left-color: #d9dcdc; border-right-width: 0; }
.pip-two::after { content: ""; position: absolute; left: -6px; top: 21px; width: 4px; height: 2px; background: #d9dcdc; box-shadow: 0 -4px 0 #d9dcdc; }
.pip-two::before { display: none; }
.pip-both::after { content: ""; position: absolute; right: -6px; top: 18px; border: 4px solid transparent; border-right-color: #d9dcdc; border-left-width: 0; }
.ps-logo { width: 38px; height: 36px; border: 2px solid #5ea3ea; outline: 1px solid #1b3f8c; background: #0d1a5a; color: #8fc6f5; font: 700 24px/32px "Liberation Sans", sans-serif; text-align: center; }
.work-grid { width: 40px; height: 36px; display: grid; grid-template-columns: 1fr 1fr; grid-template-rows: 14px 1fr; gap: 1px; background: #a9afb1; margin-top: -6px; }
.tile-work { overflow: hidden; }
.work-grid span { background: #868e91; }
.work-grid .work-on { background: #6d5360; display: flex; align-items: center; justify-content: center; }

/* android studio behind */
.studio { position: absolute; left: 760px; top: 24px; width: 840px; height: 876px; display: flex; flex-direction: column; background: #e8e8e8; }
.studio-row { flex: none; background: #e8e8e8; border-bottom: 1px solid #a6a6a6; }
.studio-menu { height: 24px; }
.studio-tools { height: 31px; display: flex; align-items: center; background: #ebebeb; padding-left: 73px; }
.st-folder { margin-top: 2px; }
.st-sep { width: 1px; height: 22px; background: #c9c9c9; }
.st-folder + .st-sep { margin-left: 6px; margin-right: 7px; }
.st-sdk + .st-sep { margin-left: 10px; margin-right: 9px; }
.st-help { color: #2a9fe0; font: 700 18px/1 "Liberation Sans", sans-serif; }
.st-search { margin-left: auto; margin-right: 9px; }
.st-user { margin-right: 5px; }
.studio-crumb { height: 25px; display: flex; align-items: center; background: #d4d4d4; padding-left: 66px; }
.crumb-text { color: #6c9ec9; font-size: 15px; }
.crumb-chev { width: 8px; height: 24px; margin-left: 0; background: linear-gradient(to bottom left, transparent 44%, #999 48%, #999 52%, transparent 56%) top/100% 50% no-repeat, linear-gradient(to top left, transparent 44%, #999 48%, #999 52%, transparent 56%) bottom/100% 50% no-repeat; }
.studio-body { flex: 1; display: flex; min-height: 0; }
.studio-left { flex: 1; display: flex; flex-direction: column; min-width: 0; }
.studio-strip { height: 25px; background: #ebebeb; border-bottom-color: #999; }
.studio-gap { height: 4px; background: #f6f6f6; border-bottom-color: #999; }
.studio-tabs { height: 31px; background: #ececec; display: flex; justify-content: flex-end; align-items: center; padding-right: 3px; border-bottom: 1px solid #9a9a9a; }
.tab-x { color: #666; font-size: 20px; line-height: 1; width: 14px; margin-top: -6px; }
.editor { position: relative; flex: 1; background: #2a2b24; }
.mark { position: absolute; background: #8f8f00; }
.m1 { left: 805px; top: 1px; width: 11px; height: 10px; }
.m2 { left: 803px; top: 19px; width: 13px; height: 2px; }
.m3 { left: 803px; top: 45px; width: 13px; height: 8px; }
.m4 { left: 803px; top: 66px; width: 13px; height: 12px; }
.m5 { left: 803px; top: 100px; width: 13px; height: 3px; }
.noal { position: absolute; left: 776px; top: 87px; width: 41px; height: 14px; background: #4a4b42; color: #77776c; font: 12px/14px "Liberation Mono", monospace; padding-left: 10px; overflow: hidden; }
.bluel { position: absolute; left: 799px; width: 2px; background: #3f6a99; }
.b1 { top: 48px; height: 11px; }
.b2 { top: 100px; height: 5px; }
.b3 { top: 143px; height: 5px; }
.b4 { top: 153px; height: 5px; }
.b5 { top: 165px; height: 5px; }
.b6 { top: 192px; height: 98px; }
.b7 { top: 422px; height: 9px; }
.greyb { position: absolute; left: 807px; width: 10px; background: #4d4f47; }
.g1 { top: 237px; height: 58px; }
.g2 { top: 515px; height: 175px; }
.settingsrow { position: absolute; left: 776px; top: 443px; width: 41px; height: 26px; background: #e9e9e9; display: flex; align-items: center; justify-content: space-between; padding: 0 3px 0 0; }
.console-tab { flex: none; height: 22px; background: #efefef; border-bottom: 1px solid #aaa; padding-left: 776px; font-size: 12.500px; line-height: 22px; color: #333; white-space: nowrap; }
.console-foot { flex: none; height: 23px; background: #ececec; display: flex; justify-content: flex-end; align-items: center; gap: 14px; padding-right: 6px; }
.stripe { flex: none; width: 23px; background: #e8e8e8; border-left: 1px solid #aaa; display: flex; flex-direction: column; justify-content: space-between; align-items: center; padding: 10px 0 11px; }
.stripe-top, .stripe-bottom { display: flex; flex-direction: column; align-items: center; gap: 3px; }
.stripe-label { writing-mode: vertical-rl; font-size: 13px; line-height: 14px; color: #222; }

/* photoshop */
.ps { position: absolute; left: 790px; top: 164px; width: 746px; height: 736px; display: flex; flex-direction: column; background: #3a3a3a; border-radius: 0 5px 0 0; box-shadow: 0 -1px 0 #777; font-family: "Liberation Sans", sans-serif; color: #eee; }
.ps-title { flex: none; height: 33px; background: #474747; display: flex; justify-content: flex-end; padding-right: 7px; }
.ps-ctrls { display: flex; height: 19px; margin-top: 2px; border: 1px solid #3a3a3a; border-top: 0; border-radius: 0 0 3px 3px; }
.ps-ctrl { width: 28px; display: flex; align-items: center; justify-content: center; color: #999; font-size: 15px; font-weight: 700; border-right: 1px solid #3a3a3a; }
.ps-ctrl-n { width: 27px; }
.ps-ctrl-w { width: 47px; border-right: 0; }
.pc-min { width: 10px; height: 3px; background: #999; margin-top: 6px; }
.pc-max { width: 10px; height: 8px; border: 2px solid #999; }
.ps-options { flex: none; height: 35px; background: #525252; border-top: 1px solid #2e2e2e; border-bottom: 1px solid #2b2b2b; display: flex; justify-content: flex-end; align-items: center; padding-right: 10px; }
.ps-workspace { width: 170px; height: 20px; background: linear-gradient(#666, #4b4b4b); border: 1px solid #222; border-radius: 2px; display: flex; align-items: center; justify-content: space-between; padding: 0 4px 0 6px; font-size: 9.500px; color: #eee; }
.updown { width: 0; height: 14px; display: block; position: relative; margin-right: 4px; }
.updown::before, .updown::after { content: ""; position: absolute; left: -3px; border: 3px solid transparent; }
.updown::before { top: 0; border-bottom: 4px solid #ddd; border-top-width: 0; }
.updown::after { bottom: 0; border-top: 4px solid #ddd; border-bottom-width: 0; }
.updown.dim::before { border-bottom-color: #999; }
.updown.dim::after { border-top-color: #999; }
.ps-body { flex: 1; display: flex; min-height: 0; }
.ps-doc { flex: none; width: 425px; display: flex; flex-direction: column; background: #3c3c3c; }
.doc-main { flex: 1; display: flex; min-height: 0; }
.canvas { flex: 1; background: #1b1b1b; }
.vscroll { flex: none; width: 16px; margin-right: 1px; background: #3c3c3c; display: flex; flex-direction: column; }
.vthumb { flex: 1; background: #d3cfc8; border-left: 1px solid #eee; }
.vbtn { flex: none; height: 15px; margin-top: 2px; background: #d8d5ce; color: #111; font-size: 8px; line-height: 15px; text-align: center; }
.hscroll { flex: none; height: 15px; margin-right: 17px; display: flex; gap: 1px; }
.hthumb { flex: 1; background: #d3cfc8; border-top: 1px solid #efefef; }
.hbtn { flex: none; width: 13px; background: #d8d5ce; color: #111; font-size: 8px; line-height: 15px; text-align: center; }
.doc-foot { flex: none; height: 23px; margin-top: 4px; margin-right: 10px; background: #3d3d3d; border-top: 1px solid #222; display: flex; align-items: center; justify-content: flex-end; padding-right: 3px; }
.ps-right { flex: 1; display: flex; flex-direction: column; min-width: 0; }
.collapse { flex: none; height: 11px; background: #333; color: #bbb; font-size: 8px; line-height: 11px; display: flex; justify-content: space-between; padding: 0 5px 0 26px; margin-right: 4px; }
.ps-columns { flex: 1; display: flex; min-height: 0; }
.dock { flex: none; width: 41px; background: linear-gradient(90deg, #303030, #565656 60%, #3a3a3a); border-right: 2px solid #2d2d2d; display: flex; flex-direction: column; align-items: stretch; }
.dock-group { height: 41px; border-bottom: 1px solid #2c2c2c; display: flex; flex-direction: column; align-items: flex-end; padding-right: 4px; }
.dock-group svg { opacity: .75; }
.dock-dots { width: 24px; height: 3px; margin: 5px -4px 3px 0; background: repeating-linear-gradient(90deg, #888 0 1px, transparent 1px 2px); }
.panels { flex: none; width: 276px; display: flex; flex-direction: column; gap: 4px; margin-right: 4px; margin-left: 1px; }
.panel { background: #535353; border: 1px solid #2a2a2a; border-width: 0 1px; }
.ptabs { height: 18px; display: flex; align-items: stretch; background: #3a3a3a; border-bottom: 1px solid #2a2a2a; position: relative; }
.ptab { display: block; font-size: 10px; font-weight: 700; letter-spacing: 1.100px; line-height: 18px; color: #9c9c9c; text-align: center; border-right: 1px solid #2a2a2a; background: #424242; white-space: nowrap; }
.ptab-on { background: #535353; color: #e3e3e3; margin-bottom: -1px; border-bottom: 1px solid #535353; }
.ptw-56 { width: 56px; }
.ptw-62 { width: 62px; }
.ptw-67 { width: 66px; }
.ptw-48 { width: 48px; }
.ptw-59 { width: 59px; }
.ptw-61 { width: 61px; }
.ptw-53 { width: 53px; }
.pmenu { margin: 4px 3px 0 auto; }
.color-body { height: 99px; padding-top: 8px; }
.color-main { display: flex; height: 67px; }
.swatches { position: relative; width: 37px; flex: none; }
.sw { position: absolute; }
.sw-fg { left: 4px; top: 2px; width: 19px; height: 19px; background: #3bdbea; border: 1px solid #fff; outline: 1px solid #222; z-index: 1; }
.sw-bg { left: 14px; top: 12px; width: 19px; height: 19px; background: #3bdbea; border: 1px solid #fff; outline: 1px solid #222; }
.sw-warn { position: absolute; left: 9px; top: 52px; }
.sw-web { left: 25px; top: 51px; width: 13px; height: 13px; background: #5ccde0; border: 1px solid #fff; outline: 1px solid #222; }
.rgb { display: flex; flex-direction: column; gap: 6px; }
.rgb-row { display: flex; height: 18px; }
.rgb-l { width: 19px; padding-left: 3px; font-size: 9px; line-height: 18px; color: #eee; }
.slider { position: relative; width: 149px; height: 6px; margin-top: 1px; outline: 1px solid #7a7a7a; }
.s-r { background: linear-gradient(90deg, #00dbea, #ffdbea); }
.s-v { background: linear-gradient(90deg, #3b00ea, #3bffea); }
.s-b { background: linear-gradient(90deg, #3bdb00, #3bdbff); }
.thumb { position: absolute; top: 7px; width: 10px; height: 8px; background: linear-gradient(#bbb, #777); clip-path: polygon(50% 0, 100% 50%, 100% 100%, 0 100%, 0 50%); }
.th-r { left: 29px; }
.th-v { left: 122px; }
.th-b { left: 131px; }
.rgb-in { width: 46px; margin-left: 6px; height: 18px; background: #3a3a3a; border: 1px solid #2e2e2e; border-bottom-color: #6c6c6c; border-right-color: #6c6c6c; font-size: 9px; line-height: 16px; padding-left: 3px; color: #fff; }
.spectrum { position: relative; margin-left: 35px; width: 200px; height: 16px; margin-top: 6px; border: 1px solid #333; background: linear-gradient(#fff0, #fff0 55%, #000 100%), linear-gradient(#fff, #fff0 45%), linear-gradient(90deg, #f00, #ff0 18%, #0d0 38%, #0cf 52%, #00f 68%, #f0f 82%, #f03 96%); }
.spec-w { position: absolute; right: 0; top: 0; width: 8px; height: 7px; background: #fff; }
.spec-k { position: absolute; right: 0; bottom: 0; width: 8px; height: 7px; background: #000; }
.adj-body { height: 101px; padding: 4px 0 0 0; }
.adj-title { font-size: 10px; font-weight: 700; line-height: 14px; padding-left: 7px; color: #f0f0f0; letter-spacing: .35px; }
.adj-row { height: 27px; display: flex; align-items: center; justify-content: center; gap: 8px; padding-right: 8px; }
.adj-row svg { width: 16px; height: 16px; }
.panel-layers { flex: 1; display: flex; flex-direction: column; min-height: 0; margin-bottom: 5px; }
.lrow { flex: none; display: flex; align-items: center; border-bottom: 1px solid #3a3a3a; padding-left: 4px; }
.lrow-filter { height: 28px; }
.lrow-blend { height: 28px; }
.lrow-lock { height: 27px; border-bottom-color: #333; }
.pdrop { height: 20px; border: 1px solid #2c2c2c; border-radius: 2px; background: linear-gradient(#666, #4d4d4d); font-size: 10px; display: flex; align-items: center; padding: 0 0 0 6px; gap: 4px; color: #eee; }
.pdrop .updown { margin-left: auto; margin-right: 6px; }
.pd-type { width: 80px; }
.pd-mode { width: 154px; height: 19px; background: #535353; border-color: #3b3b3b; color: #999; margin-right: 5px; padding-left: 7px; }
.filter-icons { margin-left: 31px; display: flex; align-items: center; gap: 11px; width: 118px; }
.ficon-t { font: 700 15px/12px "Liberation Serif", serif; color: #bbb; }
.filter-toggle { margin-left: 14px; width: 11px; height: 18px; border: 1px solid #2b2b2b; background: #333; }
.filter-toggle i { height: 8px; background: #9a9a9a; }
.plabel { font-size: 9.500px; color: #aaa; white-space: nowrap; letter-spacing: .15px; }
.pcombo { width: 55px; height: 18px; margin-left: 6px; display: flex; border: 1px solid #454545; background: #444; font-size: 9.500px; line-height: 16px; color: #8a8a8a; }
.pcombo span { width: 35px; flex: none; text-align: center; white-space: nowrap; overflow: hidden; }
.pcombo b { flex: 1; background: #5a5a5a; font-size: 9px; font-weight: 400; text-align: center; color: #bbb; }
.verrou { margin-right: 8px; color: #888; }
.lrow-lock svg { margin-right: 7px; }
.fond { margin-left: auto; margin-top: -3px; color: #aaa; }
.layers { flex: 1; display: flex; min-height: 0; }
.layer-list { flex: 1; min-width: 0; overflow: hidden; }
.layer { height: 32px; display: flex; align-items: center; border-bottom: 1px solid #3d3d3d; padding: 0 0 3px 7px; }
.layer-sel { background: #53647a; }
.eye { width: 12px; height: 12px; border: 1px solid #3a3a3a; margin-right: 13px; }
.lthumb { position: relative; width: 32px; height: 25px; background: linear-gradient(#f2f3f8, #e2e4f3); border: 1px solid #000; display: flex; justify-content: center; margin-right: 10px; flex: none; }
.lphone { width: 12px; height: 21px; margin-top: 1px; margin-left: 2px; background: radial-gradient(circle, #cfd0f0 0 .5px, transparent 1px) 1px 8px/4px 4px no-repeat, linear-gradient(#4c51af, #7474cf); display: flex; justify-content: flex-end; align-items: flex-end; }
.lphone i { width: 6px; height: 3px; background: #3bdbea; }
.lcorners { position: absolute; left: -3px; top: -3px; }
.lname { font-size: 10px; color: #f2f2f2; margin-top: 2px; }
.layer-scroll { flex: none; width: 16px; display: flex; flex-direction: column; align-items: center; background: #464646; padding-top: 8px; }
.ls-up { border: 3px solid transparent; border-bottom: 4px solid #eee; border-top: 0; }
.ls-thumb { width: 13px; height: 64px; margin-top: 11px; background: linear-gradient(90deg, #8a8a8a, #6b6b6b); border-radius: 3px; }
.ls-down { margin-top: auto; margin-bottom: 4px; border: 3px solid transparent; border-top: 4px solid #eee; border-bottom: 0; }
.layer-foot { flex: none; height: 21px; display: flex; align-items: center; justify-content: flex-end; gap: 15px; padding-right: 29px; background: #4b4b4b; border-top: 1px solid #2d2d2d; border-bottom: 1px solid #2d2d2d; }
.fx { color: #999; font: italic 15px/1 "Liberation Serif", serif; }

/* shared window chrome */
.win-head { flex: none; background: #3d3c37; border-radius: 6px 6px 0 0; color: #dfdbd2; }
.win-title { display: flex; align-items: center; }
.win-btns { display: flex; gap: 3px; }
.dot { width: 16px; height: 16px; border-radius: 50%; display: flex; align-items: center; justify-content: center; color: #3c3b37; }
.dot-dim { background: #5c5b55; color: #3e3d38; }
.dot-red { background: linear-gradient(#f07746, #dd4814); color: #5b1f08; }
.dot-grey { background: linear-gradient(#77756e, #5c5b55); color: #39382f; }

/* files window */
.files { position: absolute; left: 57px; top: 24px; width: 772px; height: 876px; display: flex; flex-direction: column; box-shadow: 0 2px 14px rgba(0,0,0,.35); border-radius: 6px 6px 0 0; }
.files .win-head { height: 71px; background: linear-gradient(#403f3a, #3d3c37); }
.files .win-title { height: 28px; padding: 2px 0 0 7px; }
.files-name { margin-left: 13px; font-size: 14.500px; color: #8f8c84; }
.files-tools { display: flex; padding: 5px 8px 0 8px; height: 38px; }
.tgroup { display: flex; height: 33px; border: 1px solid #4f4d46; border-radius: 4px; }
.tbtn { display: flex; align-items: center; justify-content: center; font-size: 14.200px; color: #a8a59d; border-right: 1px solid #4f4d46; height: 100%; padding-bottom: 2px; }
.tgroup .tbtn:last-child { border-right: 0; }
.tb-nav { width: 31px; padding-bottom: 0; }
.pathbar { margin-left: 10px; }
.tb-arrow { width: 22px; }
.tb-arrow-r { width: 22px; }
.tri-l { border: 5px solid transparent; border-right: 5px solid #aaa7a0; border-left: 0; }
.tri-r { border: 5px solid transparent; border-left: 5px solid #aaa7a0; border-right: 0; }
.pb-doc { width: 102px; }
.pb-cap { width: 77px; }
.pb-lab { width: 45px; }
.pb-io { width: 37px; }
.pb-calc { width: 93px; }
.pb-res { width: 46px; background: #4b4943; color: #c4c1b9; font-weight: 700; }
.tright { margin-left: auto; display: flex; gap: 8px; }
.tb-act { width: 33px; padding-bottom: 0; border-right: 1px solid #4f4d46 !important; }
.files-body { flex: 1; display: flex; min-height: 0; }
.sidebar { flex: none; width: 209px; background: #e5e4e2; border-left: 1px solid #cfcecb; border-right: 3px solid #cdccc9; padding-top: 3px; }
.side-item { height: 32px; display: flex; align-items: center; padding-left: 10px; font-size: 14.500px; color: #757572; gap: 10px; }
.side-dim { color: #8e8d89; }
.side-sep { height: 4px; margin: 4px 0 3px; border-top: 1px solid #c9c8c5; border-bottom: 1px solid #c9c8c5; }
.listing { position: relative; flex: 1; background: #f2f1ef; min-width: 0; overflow: hidden; }
.cols { height: 27px; background: linear-gradient(#fff, #f7f7f6); border-bottom: 1px solid #d5d4d1; display: flex; font-size: 14.500px; color: #6d6c69; line-height: 26px; }
.col { display: block; padding-left: 6px; border-right: 1px solid #dcdbd8; position: relative; white-space: nowrap; }
.col-name { width: 295px; }
.col-size { width: 87px; padding-left: 7px; }
.col-date { flex: 1; border-right: 0; }
.sort { position: absolute; right: 9px; top: 10px; border: 4px solid transparent; border-bottom: 5px solid #88857f; border-top: 0; }
.row { height: 23px; display: flex; align-items: center; font-size: 14.500px; color: #4a4946; padding-left: 13px; gap: 5px; white-space: nowrap; }
.row-sel { background: #dfdedc; }
.fname { width: 255px; overflow: hidden; }
.fsize { margin-left: 8px; color: #8a8987; width: 225px; }
.fdate { color: #8a8987; }
.pill { position: absolute; left: 186px; bottom: 0; width: 420px; height: 31px; border: 1px solid #8a8986; border-bottom: 0; border-radius: 3px 0 0 0; background: #f4f3f1; padding-left: 13px; font-size: 14.500px; line-height: 29px; color: #5b5a57; white-space: pre; }

/* viewer */
.viewer { position: absolute; left: 428px; top: 141px; width: 800px; height: 670px; display: flex; flex-direction: column; box-shadow: 0 6px 26px 4px rgba(0,0,0,.55); border-radius: 6px 6px 0 0; }
.vw-head { height: 70px; background: linear-gradient(#55534a 0, #403f3a 41%, #3e3d38 45%, #53514a 100%); border-bottom: 1px solid #2f2e2a; }
.vw-title { height: 29px; padding-left: 7px; }
.vw-name { margin-left: 12px; margin-top: -2px; font-size: 15px; font-weight: 600; color: #e2ded5; letter-spacing: .2px; }
.vw-tools { display: flex; justify-content: space-between; padding: 3px 8px 0 8px; }
.zoombox { display: flex; height: 33px; border: 1px solid #2f2e2a; border-radius: 4px; overflow: hidden; }
.zoom-btn { width: 31px; display: flex; align-items: center; justify-content: center; }
.zoom-sq { width: 12px; height: 12px; border-radius: 1px; background: #dbd8d1; color: #3c3b37; font: 700 12px/12px "Liberation Sans", sans-serif; text-align: center; }
.zoom-val { width: 86px; background: #fff; color: #3c3b37; display: flex; align-items: center; justify-content: space-between; padding: 0 8px 0 13px; font-size: 14px; }
.vw-full { width: 33px; height: 33px; border: 1px solid #33322d; border-radius: 4px; display: flex; align-items: center; justify-content: center; }
.stage { flex: 1; display: flex; justify-content: center; padding: 35px 0 0 0; background: linear-gradient(172deg, #eceff6, #dcdcef); }
.phone { width: 298px; height: 530px; display: flex; flex-direction: column; background: linear-gradient(175deg, #4c51af, #7576d0); box-shadow: 0 12px 24px rgba(70,70,170,.32); color: #fff; font-family: "Inter", "Roboto", sans-serif; }
.status { flex: none; height: 16px; display: grid; grid-template-columns: 1fr auto 1fr; align-items: center; font-size: 9.500px; padding: 0 4px 0 5px; }
.st-left { display: flex; align-items: center; gap: 7px; }
.sigdots { display: flex; gap: 1px; }
.sigdots b { width: 5px; height: 5px; border-radius: 50%; background: #fff; }
.st-right { display: flex; justify-content: flex-end; align-items: center; gap: 3px; font-weight: 300; }
.batt { width: 19px; height: 7px; background: #fff; border-radius: 1.500px; }
.st-mid { font-weight: 400; }
.display { flex: none; height: 140px; padding: 36px 29px 0 0; text-align: right; }
.expr { font-size: 16px; font-weight: 300; line-height: 20px; color: #c6c8ec; letter-spacing: -.4px; margin-right: 1px; }
.result { font-size: 64px; font-weight: 200; line-height: 70px; margin-top: 2px; letter-spacing: -2px; }
.keys { flex: 1; display: grid; grid-template-columns: repeat(4, 1fr); grid-template-rows: repeat(5, 1fr); }
.key { display: flex; align-items: center; justify-content: center; font-size: 19px; font-weight: 400; padding-left: 3px; }
.key-op { background: rgba(255,255,255,.13); font-size: 27px; font-weight: 300; padding: 0 0 4px 0; }
.key-eq { grid-column: span 2; background: #39dbea; font-size: 30px; font-weight: 300; padding: 0 2px 6px 0; box-shadow: 0 0 16px rgba(60,60,130,.3); }
```
